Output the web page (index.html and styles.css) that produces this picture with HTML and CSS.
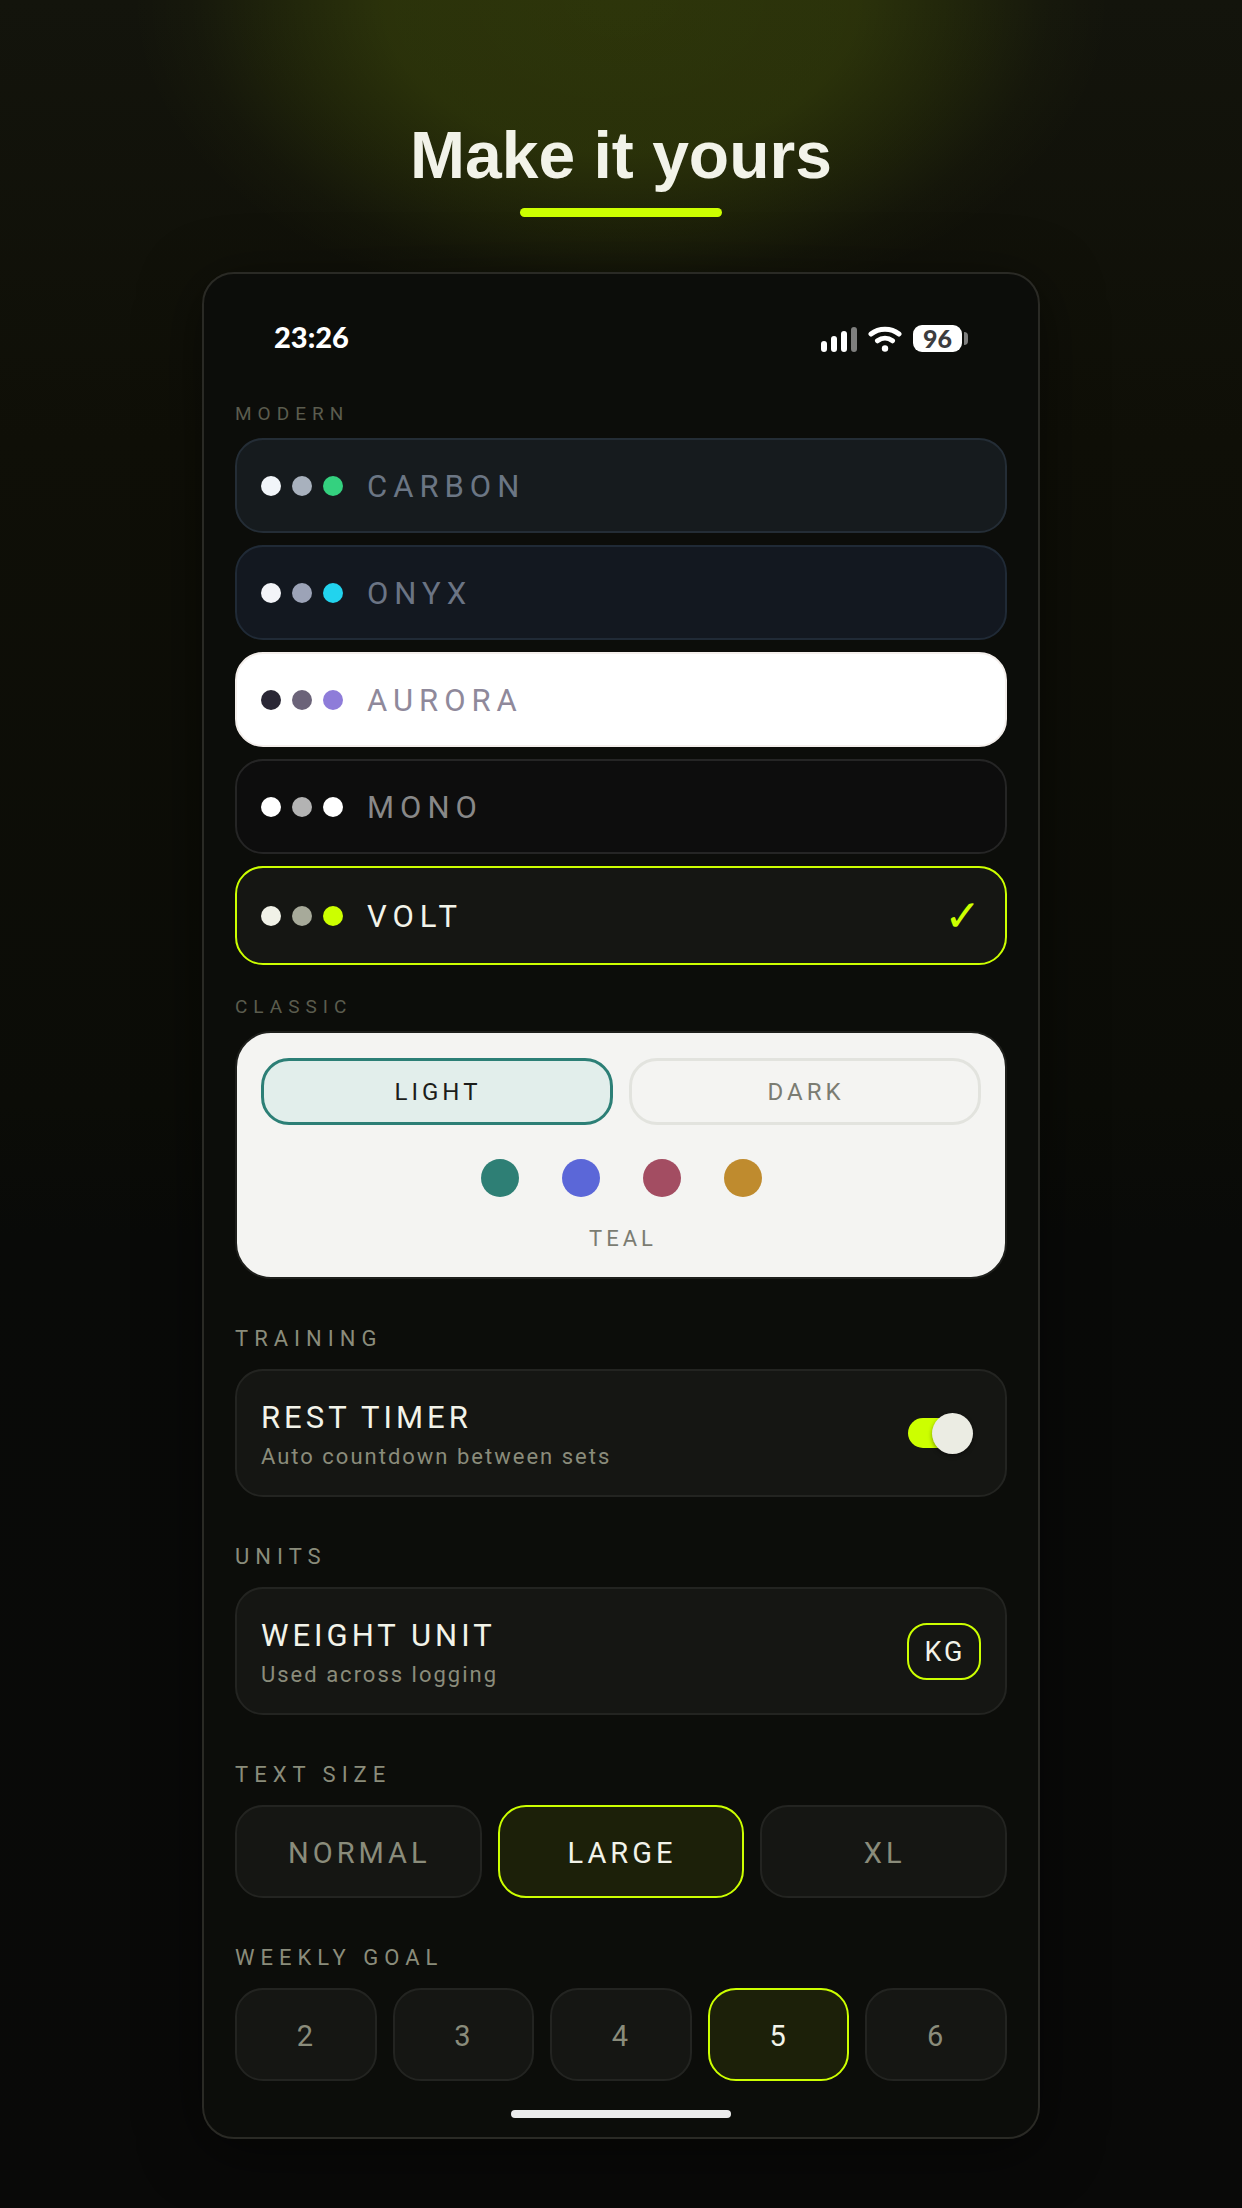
FILE: index.html
```html
<!DOCTYPE html>
<html lang="en">
<head>
    <meta charset="UTF-8">
    <meta name="viewport" content="width=device-width, initial-scale=1.0">
    <title>Make it yours</title>
    <link rel="stylesheet" href="styles.css">
</head>
<body>

<header class="hero">
    <h1>Make it yours</h1>
    <div class="underline"></div>
</header>

<main class="phone">
    <div class="status-bar">
        <span class="time">23:26</span>
        <div class="status-icons">
            <svg class="signal" width="36" height="26" viewBox="0 0 36 26" fill="#fff" aria-hidden="true">
                <rect x="0" y="15" width="6" height="11" rx="3"/>
                <rect x="10" y="10" width="6" height="16" rx="3"/>
                <rect x="20" y="5" width="6" height="21" rx="3"/>
                <rect x="30" y="1" width="6" height="25" rx="3" fill="#7f7f7e"/>
            </svg>
            <svg class="wifi" width="34" height="26" viewBox="0 0 34 26" fill="none" stroke="#fff" stroke-width="5" stroke-linecap="round" aria-hidden="true">
                <path d="M3 8C11 1.600 23 1.600 31 8"/>
                <path d="M9.500 14.800C14 11.500 20 11.500 24.500 14.800"/>
                <circle cx="17" cy="22.500" r="3.200" fill="#fff" stroke="none"/>
            </svg>
            <div class="battery">
                <span class="battery-level">96</span>
                <span class="battery-tip"></span>
            </div>
        </div>
    </div>

    <section class="group">
        <h2 class="caption">MODERN</h2>
        <button class="theme carbon" type="button">
            <span class="dots"><i></i><i></i><i></i></span>
            <span class="theme-name">CARBON</span>
        </button>
        <button class="theme onyx" type="button">
            <span class="dots"><i></i><i></i><i></i></span>
            <span class="theme-name">ONYX</span>
        </button>
        <button class="theme aurora" type="button">
            <span class="dots"><i></i><i></i><i></i></span>
            <span class="theme-name">AURORA</span>
        </button>
        <button class="theme mono" type="button">
            <span class="dots"><i></i><i></i><i></i></span>
            <span class="theme-name">MONO</span>
        </button>
        <button class="theme volt" type="button" aria-pressed="true">
            <span class="dots"><i></i><i></i><i></i></span>
            <span class="theme-name">VOLT</span>
            <span class="check">✓</span>
        </button>
    </section>

    <section class="group classic">
        <h2 class="caption">CLASSIC</h2>
        <div class="classic-card">
            <div class="modes">
                <button class="mode selected" type="button" aria-pressed="true">LIGHT</button>
                <button class="mode" type="button">DARK</button>
            </div>
            <div class="swatches">
                <button class="swatch teal" type="button" aria-label="Teal"></button>
                <button class="swatch indigo" type="button" aria-label="Indigo"></button>
                <button class="swatch rose" type="button" aria-label="Rose"></button>
                <button class="swatch amber" type="button" aria-label="Amber"></button>
            </div>
            <p class="swatch-name">TEAL</p>
        </div>
    </section>

    <section class="setting">
        <h2>TRAINING</h2>
        <div class="card">
            <div class="card-text">
                <label class="card-title" for="rest-timer">REST TIMER</label>
                <p class="card-note">Auto countdown between sets</p>
            </div>
            <input class="toggle" id="rest-timer" type="checkbox" checked>
        </div>
    </section>

    <section class="setting">
        <h2>UNITS</h2>
        <div class="card">
            <div class="card-text">
                <h3 class="card-title">WEIGHT UNIT</h3>
                <p class="card-note">Used across logging</p>
            </div>
            <button class="unit" type="button">KG</button>
        </div>
    </section>

    <section class="setting">
        <h2>TEXT SIZE</h2>
        <div class="options">
            <button class="option" type="button">NORMAL</button>
            <button class="option selected" type="button" aria-pressed="true">LARGE</button>
            <button class="option" type="button">XL</button>
        </div>
    </section>

    <section class="setting">
        <h2>WEEKLY GOAL</h2>
        <div class="options">
            <button class="option" type="button">2</button>
            <button class="option" type="button">3</button>
            <button class="option" type="button">4</button>
            <button class="option selected" type="button" aria-pressed="true">5</button>
            <button class="option" type="button">6</button>
        </div>
    </section>

    <div class="home-bar"></div>
</main>

</body>
</html>
```
FILE: styles.css
```css
* {
    box-sizing: border-box;
}
body {
    margin: 0;
    min-height: 100vh;
    padding: 117px 24px 69px;
    font-family: Roboto, sans-serif;
    color: #f2f3e9;
    background:
        radial-gradient(ellipse 490px 320px at 50% 0, rgba(204, 255, 0, 0.14) 0%, rgba(204, 255, 0, 0.13) 48%, rgba(204, 255, 0, 0.08) 67%, rgba(204, 255, 0, 0.02) 87%, transparent 100%),
        linear-gradient(#13140c, #0f0f07 20%, #0b0c07 50%, #090a08 56%, #090908);
}
h1, h2, h3, p {
    margin: 0;
    font-weight: 400;
}
button {
    font-family: inherit;
    color: inherit;
    background: none;
    padding: 0;
    cursor: pointer;
}

/* heading */
.hero {
    display: flex;
    flex-direction: column;
    align-items: center;
    gap: 15px;
    margin-bottom: 55px;
}
.hero h1 {
    font-family: "Liberation Sans", Arial, sans-serif;
    font-size: 66px;
    line-height: 76px;
    font-weight: 700;
}
.underline {
    width: 202px;
    height: 9px;
    border-radius: 5px;
    background: #ccff00;
}

/* phone screen */
.phone {
    max-width: 838px;
    margin: 0 auto;
    padding: 51px 31px 19px;
    border: 2px solid #2a2a25;
    border-radius: 32px;
    background: #0c0d0a;
    box-shadow: 0 12px 60px rgba(0, 0, 0, 0.5);
}
.status-bar {
    display: flex;
    justify-content: space-between;
    align-items: flex-start;
    height: 28px;
    padding: 0 39px;
    margin-bottom: 49px;
    color: #fff;
    font-family: Lato, sans-serif;
}
.time {
    font-size: 29px;
    line-height: 24px;
    font-weight: 900;
}
.status-icons {
    display: flex;
    align-items: center;
    gap: 11px;
}
.battery {
    display: flex;
    align-items: center;
    gap: 2px;
}
.battery-level {
    width: 49px;
    height: 27px;
    border-radius: 9px;
    background: #fff;
    color: #3c3c3e;
    font-size: 25px;
    line-height: 27px;
    font-weight: 900;
    text-align: center;
}
.battery-tip {
    width: 4px;
    height: 13px;
    border-radius: 0 4px 4px 0;
    background: #7f7f7e;
}

/* themes */
.group {
    display: flex;
    flex-direction: column;
    gap: 12px;
}
.caption {
    font-size: 19px;
    line-height: 24px;
    letter-spacing: 6px;
    color: #5b5c4e;
}
.theme {
    display: flex;
    align-items: center;
    gap: 24px;
    padding: 24px;
    border: 2px solid;
    border-radius: 28px;
    font-size: 31px;
    line-height: 41px;
    letter-spacing: 6px;
    text-align: left;
}
.theme-name {
    padding-top: 2px;
}
.dots {
    display: flex;
    gap: 11px;
}
.dots i {
    width: 20px;
    height: 20px;
    border-radius: 50%;
}
.carbon { background: #161b1e; border-color: #242d36; }
.carbon .theme-name { color: #6b7684; }
.carbon i:nth-child(1) { background: #f1f5f9; }
.carbon i:nth-child(2) { background: #a8b1bd; }
.carbon i:nth-child(3) { background: #34d17f; }

.onyx { background: #131820; border-color: #202a36; }
.onyx .theme-name { color: #6b7484; }
.onyx i:nth-child(1) { background: #f3f4f8; }
.onyx i:nth-child(2) { background: #9ca3b7; }
.onyx i:nth-child(3) { background: #22d3ee; }

.aurora { background: #fff; border-color: #f4efec; }
.aurora .theme-name { color: #8f899b; }
.aurora i:nth-child(1) { background: #2a2735; }
.aurora i:nth-child(2) { background: #6b6379; }
.aurora i:nth-child(3) { background: #8e7cd9; }

.mono { background: #0d0d0d; border-color: #252525; }
.mono .theme-name { color: #888; }
.mono i:nth-child(1) { background: #fff; }
.mono i:nth-child(2) { background: #b3b3b3; }
.mono i:nth-child(3) { background: #fff; }

.volt { background: #151613; border-color: #ccff00; }
.volt i:nth-child(1) { background: #f0f1e7; }
.volt i:nth-child(2) { background: #a7aa9a; }
.volt i:nth-child(3) { background: #ccff00; }
.check {
    margin-left: auto;
    font-family: "DejaVu Sans", sans-serif;
    font-size: 44px;
    line-height: 47px;
    letter-spacing: 0;
    color: #ccff00;
}

/* classic theme */
.classic {
    margin-top: 30px;
}
.classic-card {
    padding: 25px 24px 23px;
    border: 2px solid #1e1f1c;
    border-radius: 36px;
    background: #f4f4f2;
    color: #7b7c72;
}
.modes {
    display: flex;
    gap: 16px;
}
.mode {
    flex: 1;
    height: 67px;
    border: 3px solid #e2e3de;
    border-radius: 28px;
    font-size: 24px;
    letter-spacing: 4px;
    text-indent: 2px;
}
.mode.selected {
    color: #1c1d1a;
    background: #e2eeeb;
    border-color: #2c7f76;
}
.swatches {
    display: flex;
    justify-content: center;
    gap: 43px;
    margin: 34px 0 27px;
}
.swatch {
    width: 38px;
    height: 38px;
    border: 0;
    border-radius: 50%;
}
.teal { background: #2e7f75; }
.indigo { background: #5b67d8; }
.rose { background: #a34d62; }
.amber { background: #bf8b2e; }
.swatch-name {
    font-size: 22px;
    line-height: 30px;
    letter-spacing: 4px;
    text-indent: 4px;
    text-align: center;
}

/* settings */
.setting {
    margin-top: 46px;
}
.setting h2 {
    margin-bottom: 16px;
    font-size: 22px;
    line-height: 28px;
    letter-spacing: 6px;
    color: #8a8c7b;
}
.card {
    display: flex;
    justify-content: space-between;
    align-items: center;
    padding: 25px 24px;
    border: 2px solid #232421;
    border-radius: 28px;
    background: #151613;
}
.card-text {
    padding-top: 2px;
}
.card-title {
    display: block;
    margin-bottom: 6px;
    font-size: 31px;
    line-height: 40px;
    letter-spacing: 4px;
}
.card-note {
    font-size: 22px;
    line-height: 26px;
    letter-spacing: 2px;
    color: #8a8c7b;
}
.toggle {
    appearance: none;
    display: flex;
    align-items: center;
    width: 65px;
    height: 42px;
    margin: 0 8px 0 0;
}
.toggle::before {
    content: "";
    width: 56px;
    height: 30px;
    border-radius: 15px;
    background: #ccff00;
}
.toggle::after {
    content: "";
    flex: none;
    width: 41px;
    height: 41px;
    margin-left: -32px;
    border-radius: 50%;
    background: #ebece3;
    box-shadow: 0 2px 4px rgba(0, 0, 0, 0.4);
}
.unit {
    width: 74px;
    height: 57px;
    padding-top: 2px;
    border: 2px solid #ccff00;
    border-radius: 20px;
    font-size: 27px;
    letter-spacing: 3px;
    text-indent: 2px;
}
.options {
    display: flex;
    gap: 16px;
}
.option {
    flex: 1;
    height: 93px;
    padding-top: 2px;
    border: 2px solid #232421;
    border-radius: 28px;
    background: #151613;
    color: #8a8c7b;
    font-size: 29px;
    letter-spacing: 4px;
    text-indent: 2px;
}
.option.selected {
    color: #f2f3e9;
    background: #1c2009;
    border-color: #ccff00;
}
.home-bar {
    width: 220px;
    height: 8px;
    margin: 29px auto 0;
    border-radius: 4px;
    background: #ececec;
}
```
